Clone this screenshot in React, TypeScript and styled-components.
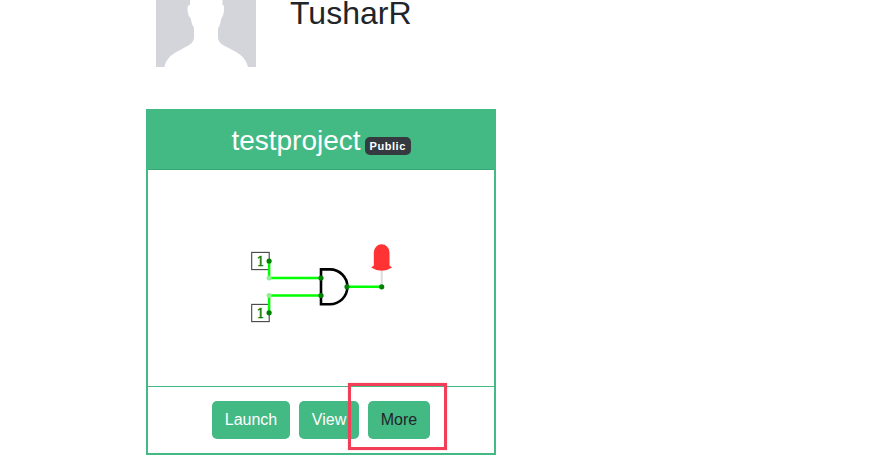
import React from "react";
import styled, { createGlobalStyle } from "styled-components";

const GlobalStyle = createGlobalStyle`
  *, *::before, *::after { box-sizing: border-box; }
  body {
    margin: 0;
    overflow: hidden;
    background: #fff;
    color: #212529;
    font: 16px/24px "Liberation Sans", Arial, sans-serif;
  }
`;

const Page = styled.main`
  height: 475px;
  padding-left: 146px;
`;

const Profile = styled.header`
  display: flex;
  align-items: flex-start;
  height: 67px;
  padding-left: 10px;
  gap: 34px;
`;

const Avatar = styled.svg`
  display: block;
  flex: none;
`;

const UserName = styled.h1`
  margin: 0;
  font-size: 32px;
  font-weight: 400;
  line-height: 26px;
`;

const Card = styled.section`
  display: flex;
  flex-direction: column;
  width: 350px;
  height: 346px;
  margin-top: 42px;
  border: 2px solid #43b984;
`;

const CardHeader = styled.div`
  display: flex;
  justify-content: center;
  height: 59px;
  padding-top: 13px;
  gap: 4px;
  background: #43b984;
  border-bottom: 1px solid #3ca776;
`;

const Title = styled.h2`
  margin: 0;
  color: #fff;
  font-size: 28px;
  font-weight: 400;
  line-height: 34px;
`;

const Badge = styled.span`
  width: 46px;
  height: 18px;
  margin-top: 13px;
  padding-left: 5px;
  border-radius: 5px;
  background: #343a40;
  color: #fff;
  font-size: 11px;
  font-weight: 700;
  letter-spacing: 0.55px;
  line-height: 18px;
`;

const Preview = styled.div`
  flex: 1;
  display: flex;
`;

const CardFooter = styled.div`
  display: flex;
  justify-content: center;
  height: 67px;
  padding-top: 14px;
  gap: 9px;
  border-top: 1px solid #43b984;
`;

const Button = styled.button<{ $dark?: boolean; $width: number }>`
  width: ${(p) => p.$width}px;
  height: 38px;
  padding: 0;
  border: 0;
  border-radius: 5px;
  background: #43b984;
  color: ${(p) => (p.$dark ? "#212529" : "#fff")};
  font: inherit;
`;

const MoreSlot = styled.div`
  position: relative;
  height: 38px;
`;

const Highlight = styled.div`
  position: absolute;
  top: -18px;
  left: -20px;
  width: 99px;
  height: 67px;
  border: 3px solid #f33e58;
  box-shadow: 0 0 1px rgba(243, 62, 88, 0.5);
  pointer-events: none;
`;

const InputValue = styled.text`
  fill: #008000;
  stroke: #008000;
  stroke-width: 0.4px;
  font: 13px "DejaVu Serif", serif;
  text-anchor: middle;
`;

const joints: [number, number][] = [
  [269.1, 261],
  [269.1, 312.8],
  [321, 278],
  [321, 295.5],
  [347, 286.8],
  [381.7, 286.8],
];

function Circuit() {
  return (
    <svg width="346" height="216" viewBox="148 170 346 216">
      <g fill="#fff" stroke="#444" strokeWidth="1.1">
        <rect x="251.7" y="252.4" width="17.5" height="17.2" />
        <rect x="251.7" y="304.4" width="17.5" height="17.2" />
      </g>
      <InputValue x="260.7" y="265.6">1</InputValue>
      <InputValue x="260.7" y="317.6">1</InputValue>
      <path d="M381.7 271v16" stroke="#dcdcdc" strokeWidth="2" />
      <path
        d="M269.1 261v17.1h52M269.1 313v-17.5h52M347 286.8h35"
        fill="none"
        stroke="#0f0"
        strokeWidth="2.5"
      />
      <path
        d="M321 269.4h9a17.4 17.4 0 0 1 0 34.8h-9z"
        fill="none"
        stroke="#000"
        strokeWidth="2.6"
      />
      <g fill="#90ee90">
        <circle cx="269.1" cy="278.1" r="2.5" />
        <circle cx="269.1" cy="295.5" r="2.5" />
      </g>
      <g fill="#008000">
        {joints.map(([x, y]) => (
          <circle key={`${x}-${y}`} cx={x} cy={y} r="2.6" />
        ))}
      </g>
      <path
        d="M373.8 252.2a7.85 7.85 0 0 1 15.7 0v13.2l2.5 2q-10.3 6.8-20.8 0l2.6-2z"
        fill="#ff3333"
      />
    </svg>
  );
}

export default function App() {
  return (
    <>
      <GlobalStyle />
      <Page>
        <Profile>
          <Avatar width="100" height="67" viewBox="0 0 100 67">
            <rect width="100" height="67" fill="#d3d5da" />
            <path
              d="M34 0V5Q31 5 31.500 10Q32 16 34.500 18Q35.500 24 38 28V37Q38 41 34.500 44C26 50.500 11 53 8.500 67H92C89 53 75 50.500 65.500 44Q62 41 62 37V29Q64.500 24 65.500 18Q67.500 16 68 10Q68.500 5 66.500 5V0Z"
              fill="#fff"
            />
          </Avatar>
          <UserName>TusharR</UserName>
        </Profile>
        <Card>
          <CardHeader>
            <Title>testproject</Title>
            <Badge>Public</Badge>
          </CardHeader>
          <Preview>
            <Circuit />
          </Preview>
          <CardFooter>
            <Button $width={78}>Launch</Button>
            <Button $width={60}>View</Button>
            <MoreSlot>
              <Button $width={62} $dark>More</Button>
              <Highlight />
            </MoreSlot>
          </CardFooter>
        </Card>
      </Page>
    </>
  );
}
